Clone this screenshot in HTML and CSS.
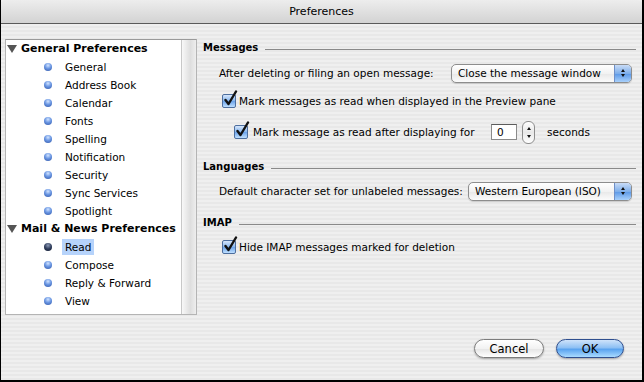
FILE: index.html
```html
<!DOCTYPE html>
<html lang="en">
<head>
    <meta charset="UTF-8">
    <title>Preferences</title>
    <link rel="stylesheet" href="styles.css">
</head>
<body>
    <div class="window">
        <div class="titlebar">Preferences</div>

        <div class="content">
            <!-- Sidebar tree -->
            <div class="sidebar">
                <ul class="tree">
                    <li class="group"><span class="disclosure"></span>General Preferences</li>
                    <li class="item"><span class="bullet"></span><span class="label">General</span></li>
                    <li class="item"><span class="bullet"></span><span class="label">Address Book</span></li>
                    <li class="item"><span class="bullet"></span><span class="label">Calendar</span></li>
                    <li class="item"><span class="bullet"></span><span class="label">Fonts</span></li>
                    <li class="item"><span class="bullet"></span><span class="label">Spelling</span></li>
                    <li class="item"><span class="bullet"></span><span class="label">Notification</span></li>
                    <li class="item"><span class="bullet"></span><span class="label">Security</span></li>
                    <li class="item"><span class="bullet"></span><span class="label">Sync Services</span></li>
                    <li class="item"><span class="bullet"></span><span class="label">Spotlight</span></li>
                    <li class="group"><span class="disclosure"></span>Mail &amp; News Preferences</li>
                    <li class="item selected"><span class="bullet"></span><span class="label">Read</span></li>
                    <li class="item"><span class="bullet"></span><span class="label">Compose</span></li>
                    <li class="item"><span class="bullet"></span><span class="label">Reply &amp; Forward</span></li>
                    <li class="item"><span class="bullet"></span><span class="label">View</span></li>
                </ul>
                <div class="scroll-strip"></div>
            </div>

            <!-- Settings pane -->
            <div class="pane">
                <div class="section-head"><span>Messages</span><span class="rule"></span></div>
                <div class="row row-after">
                    <span>After deleting or filing an open message:</span>
                    <div class="popup popup-close">
                        <span class="popup-text">Close the message window</span>
                        <span class="popup-arrows"><i class="up"></i><i class="down"></i></span>
                    </div>
                </div>
                <div class="row check check-preview">
                    <span class="checkbox"><svg width="16" height="18" viewBox="0 0 16 18"><path d="M3.5 10 L6.5 14 L14 1.5" fill="none" stroke="#111" stroke-width="2.4" stroke-linecap="round" stroke-linejoin="round"/></svg></span>
                    <span>Mark messages as read when displayed in the Preview pane</span>
                </div>
                <div class="row check sub">
                    <span class="checkbox"><svg width="16" height="18" viewBox="0 0 16 18"><path d="M3.5 10 L6.5 14 L14 1.5" fill="none" stroke="#111" stroke-width="2.4" stroke-linecap="round" stroke-linejoin="round"/></svg></span>
                    <span class="sub-label">Mark message as read after displaying for</span>
                    <span class="field">0</span>
                    <span class="stepper"><i class="up"></i><i class="down"></i></span>
                    <span class="unit">seconds</span>
                </div>

                <div class="section-head languages"><span>Languages</span><span class="rule"></span></div>
                <div class="row row-charset">
                    <span>Default character set for unlabeled messages:</span>
                    <div class="popup popup-charset">
                        <span class="popup-text">Western European (ISO)</span>
                        <span class="popup-arrows"><i class="up"></i><i class="down"></i></span>
                    </div>
                </div>

                <div class="section-head imap"><span>IMAP</span><span class="rule"></span></div>
                <div class="row check check-imap">
                    <span class="checkbox"><svg width="16" height="18" viewBox="0 0 16 18"><path d="M3.5 10 L6.5 14 L14 1.5" fill="none" stroke="#111" stroke-width="2.4" stroke-linecap="round" stroke-linejoin="round"/></svg></span>
                    <span>Hide IMAP messages marked for deletion</span>
                </div>
            </div>
        </div>

        <div class="buttons">
            <button class="btn">Cancel</button>
            <button class="btn default">OK</button>
        </div>
    </div>
</body>
</html>
```

FILE: styles.css
```css
body {
    margin: 0;
    font-family: "DejaVu Sans", sans-serif;
    font-size: 10.5px;
    color: #000;
}
.window {
    position: relative;
    width: 641px;
    height: 380px;
    border-left: 1px solid #000;
    border-right: 2px solid #000;
    border-bottom: 2px solid #000;
    background: repeating-linear-gradient(to bottom, #efefef 0, #efefef 2px, #e8e8e8 2px, #e8e8e8 4px);
}
.titlebar {
    height: 23px;
    line-height: 23px;
    text-align: center;
    font-size: 11px;
    border-bottom: 1px solid #5a5a5a;
    border-radius: 5px 5px 0 0;
    background: linear-gradient(to bottom, #ededed, #d3d3d3);
}
.content {
    display: flex;
    padding: 15px 0 0 4px;
}

/* sidebar */
.sidebar {
    display: flex;
    width: 190px;
    height: 274px;
    border: 1px solid #b4b4b4;
    border-top-color: #9a9a9a;
    background: #fff;
}
.tree {
    list-style: none;
    margin: 0;
    padding: 0;
    flex: 1;
}
.tree li {
    height: 18px;
    line-height: 18px;
    white-space: nowrap;
}
.group {
    font-weight: bold;
    font-size: 11px;
    padding-left: 1px;
    display: flex;
    align-items: center;
}
.disclosure {
    width: 0;
    height: 0;
    border-left: 5px solid transparent;
    border-right: 5px solid transparent;
    border-top: 8px solid #555;
    margin-right: 4px;
}
.item {
    display: flex;
    align-items: center;
    padding-left: 38px;
}
.bullet {
    width: 8px;
    height: 8px;
    border-radius: 50%;
    background: radial-gradient(circle at 50% 30%, #d2e4ff 0, #6b97e3 45%, #2f56a8 100%);
    margin-right: 13px;
}
.selected .bullet {
    background: radial-gradient(circle at 50% 30%, #8c9ab5 0, #2f3d5c 50%, #111a30 100%);
}
.label {
    padding: 0 3px;
    margin-left: -3px;
}
.selected .label {
    background: #b6d3fb;
    line-height: 16px;
}
.scroll-strip {
    width: 14px;
    border-left: 1px solid #c8c8c8;
    background: linear-gradient(to right, #f8f8f8, #dedede 60%, #eeeeee);
}

/* pane */
.pane {
    flex: 1;
    padding: 0 6px;
    display: flex;
    flex-direction: column;
}
.section-head {
    display: flex;
    align-items: center;
    font-weight: bold;
    font-size: 10px;
    height: 16px;
}
.section-head .rule {
    flex: 1;
    height: 0;
    border-top: 1px solid #8a8a8a;
    margin-left: 7px;
    margin-top: 5px;
}
.row {
    display: flex;
    align-items: center;
    padding-left: 16px;
    white-space: nowrap;
}
.row-after { margin-top: 8px; height: 20px; }
.row-charset { margin-top: 7px; height: 20px; }
.popup {
    display: flex;
    align-items: center;
    height: 17px;
    margin-left: auto;
    margin-right: 4px;
    border: 1px solid #8d8d8d;
    border-radius: 5px;
    background: linear-gradient(to bottom, #ffffff, #f2f2f2 50%, #e8e8e8 51%, #fbfbfb);
    overflow: hidden;
    box-shadow: 0 1px 1px rgba(0,0,0,0.15);
}
.popup-close { width: 179px; }
.popup-charset { width: 162px; }
.popup-text {
    flex: 1;
    padding-left: 6px;
}
.popup-arrows {
    width: 16px;
    height: 17px;
    display: flex;
    flex-direction: column;
    align-items: center;
    justify-content: center;
    gap: 2px;
    border-left: 1px solid #6e8fc7;
    background: linear-gradient(to bottom, #c9dcf7, #7eaeea 50%, #5a97e6 51%, #a8d0fb);
}
.up, .down {
    display: block;
    width: 0;
    height: 0;
    border-left: 2px solid transparent;
    border-right: 2px solid transparent;
}
.up { border-bottom: 3px solid #111; }
.down { border-top: 3px solid #111; }

.check {
    height: 18px;
    padding-left: 19px;
}
.check-preview { margin-top: 9px; }
.check-imap { margin-top: 8px; }
.checkbox {
    position: relative;
    width: 12px;
    height: 12px;
    border: 1px solid #4d6e9e;
    border-radius: 2px;
    background: linear-gradient(to bottom, #d6e6fb, #86b6ef 50%, #6aa2ea 51%, #bfe0ff);
    margin-right: 3px;
    flex: none;
}
.checkbox svg {
    position: absolute;
    left: -1px;
    top: -5px;
}
.sub {
    padding-left: 31px;
    margin-top: 10px;
    height: 24px;
}
.sub .checkbox { margin-right: 5px; }
.sub-label { width: 238px; }
.field {
    width: 26px;
    height: 16px;
    line-height: 15px;
    border: 1px solid #8a8a8a;
    border-top-color: #5c5c5c;
    background: #fff;
    padding-left: 5px;
    box-sizing: border-box;
}
.stepper {
    width: 13px;
    height: 23px;
    margin-left: 5px;
    border: 1px solid #8d8d8d;
    border-radius: 6px;
    background: linear-gradient(to bottom, #fff, #e8e8e8 50%, #fff);
    display: flex;
    flex-direction: column;
    align-items: center;
    justify-content: space-between;
    padding: 5px 0;
    box-sizing: border-box;
}
.unit { margin-left: 12px; }

.languages { margin-top: 14px; }
.imap { margin-top: 13px; }

/* buttons */
.buttons {
    position: absolute;
    right: 18px;
    bottom: 22px;
    display: flex;
    gap: 12px;
}
.btn {
    font-family: "DejaVu Sans", sans-serif;
    font-size: 11.5px;
    height: 19px;
    padding: 0;
    border-radius: 10px;
    border: 1px solid #7c7c7c;
    background: linear-gradient(to bottom, #ffffff, #f2f2f2 50%, #e4e4e4 51%, #ffffff);
    box-shadow: 0 1px 2px rgba(0,0,0,0.3);
    width: 70px;
}
.default {
    width: 68px;
    border-color: #2f4f8f;
    background: linear-gradient(to bottom, #cfe3fa, #8ec0f4 45%, #5aa3ef 55%, #a9dbff);
}
```
